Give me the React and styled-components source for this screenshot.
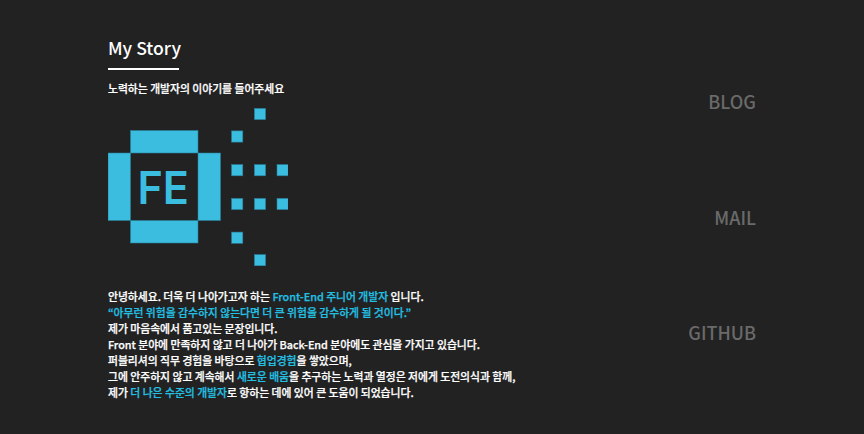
import React from 'react';
import styled, { createGlobalStyle } from 'styled-components';

const GlobalStyle = createGlobalStyle`
html, body {
  margin: 0;
  padding: 0;
  background: #222222;
  font-family: "Noto Sans CJK KR", "Noto Sans", sans-serif;
}
`;

const BLUE = '#3bbde0';
const dots = [
  [254.4, 108.4], [231.6, 130.9], [231.6, 164.6], [254.4, 164.6], [277, 164.6],
  [231.6, 198.4], [254.4, 198.4], [277, 198.4], [231.6, 232.1], [254.4, 254.6],
];

function FeLogo() {
  return (
    <LogoSvg width="180" height="158" viewBox="108 108 180 158">
      <g fill={BLUE} stroke="#2a7f98" strokeWidth="0.6">
        <rect x="130.5" y="130.5" width="67.5" height="22.5" />
        <rect x="108" y="153" width="22.5" height="67.5" />
        <rect x="198" y="153" width="22.5" height="67.5" />
        <rect x="130.5" y="220.5" width="67.5" height="22.5" />
        {dots.map(([x, y]) => (
          <rect key={`${x}-${y}`} x={x} y={y} width="11.2" height="11.2" />
        ))}
      </g>
      <LogoText x="137.5" y="204" textLength="51.5" lengthAdjust="spacingAndGlyphs">FE</LogoText>
    </LogoSvg>
  );
}

function App() {
  return (
    <>
      <GlobalStyle />
      <Page>
        <Story>
          <Title>My Story</Title>
          <Subtitle>노력하는 개발자의 이야기를 들어주세요</Subtitle>
          <FeLogo />
          <Body>
            <p>안녕하세요. 더욱 더 나아가고자 하는 <Accent>Front-End 주니어 개발자</Accent> 입니다.</p>
            <p><Accent>“아무런 위험을 감수하지 않는다면 더 큰 위험을 감수하게 될 것이다.”</Accent></p>
            <p>제가 마음속에서 품고있는 문장입니다.</p>
            <p>Front 분야에 만족하지 않고 더 나아가 Back-End 분야에도 관심을 가지고 있습니다.</p>
            <p>퍼블리셔의 직무 경험을 바탕으로 <Accent>협업경험</Accent>을 쌓았으며,</p>
            <p>그에 안주하지 않고 계속해서 <Accent>새로운 배움</Accent>을 추구하는 노력과 열정은 저에게 도전의식과 함께,</p>
            <p>제가 <Accent>더 나은 수준의 개발자</Accent>로 향하는 데에 있어 큰 도움이 되었습니다.</p>
          </Body>
        </Story>
        <Links>
          <LinkItem>BLOG</LinkItem>
          <LinkItem>MAIL</LinkItem>
          <LinkItem>GITHUB</LinkItem>
        </Links>
      </Page>
    </>
  );
}

const Page = styled.div`
  width: 864px;
  height: 434px;
  box-sizing: border-box;
  padding: 0 108px;
  display: flex;
  justify-content: space-between;
  overflow: hidden;
  background: #222222;
`;

const Story = styled.div`
  display: flex;
  flex-direction: column;
  align-items: flex-start;
  padding-top: 34px;
  color: #ffffff;
`;

const Title = styled.h2`
  margin: 0;
  width: 71px;
  height: 34px;
  border-bottom: 2px solid #ffffff;
  font-size: 17.6px;
  line-height: 28px;
  font-weight: 500;
  white-space: nowrap;
`;

const Subtitle = styled.div`
  margin-top: 9px;
  font-size: 10.8px;
  line-height: 18px;
  font-weight: 500;
  white-space: nowrap;
  -webkit-text-stroke: 0.25px currentColor;
`;

const LogoSvg = styled.svg`
  display: block;
  margin-top: 11px;
`;

const LogoText = styled.text`
  fill: ${BLUE};
  font-family: Inter, "Noto Sans", sans-serif;
  font-size: 45.5px;
  font-weight: 600;
`;

const Body = styled.div`
  margin-top: 22px;
  font-size: 10.8px;
  line-height: 16px;
  font-weight: 500;
  white-space: nowrap;
  -webkit-text-stroke: 0.25px currentColor;

  p {
    margin: 0;
  }
`;

const Accent = styled.span`
  color: #22c0e2;
`;

const Links = styled.div`
  display: flex;
  flex-direction: column;
  align-items: flex-end;
  gap: 87.5px;
  padding-top: 87px;
`;

const LinkItem = styled.div`
  color: #6a6a6a;
  font-size: 18px;
  line-height: 28px;
  font-weight: 500;
`;

export default App;
